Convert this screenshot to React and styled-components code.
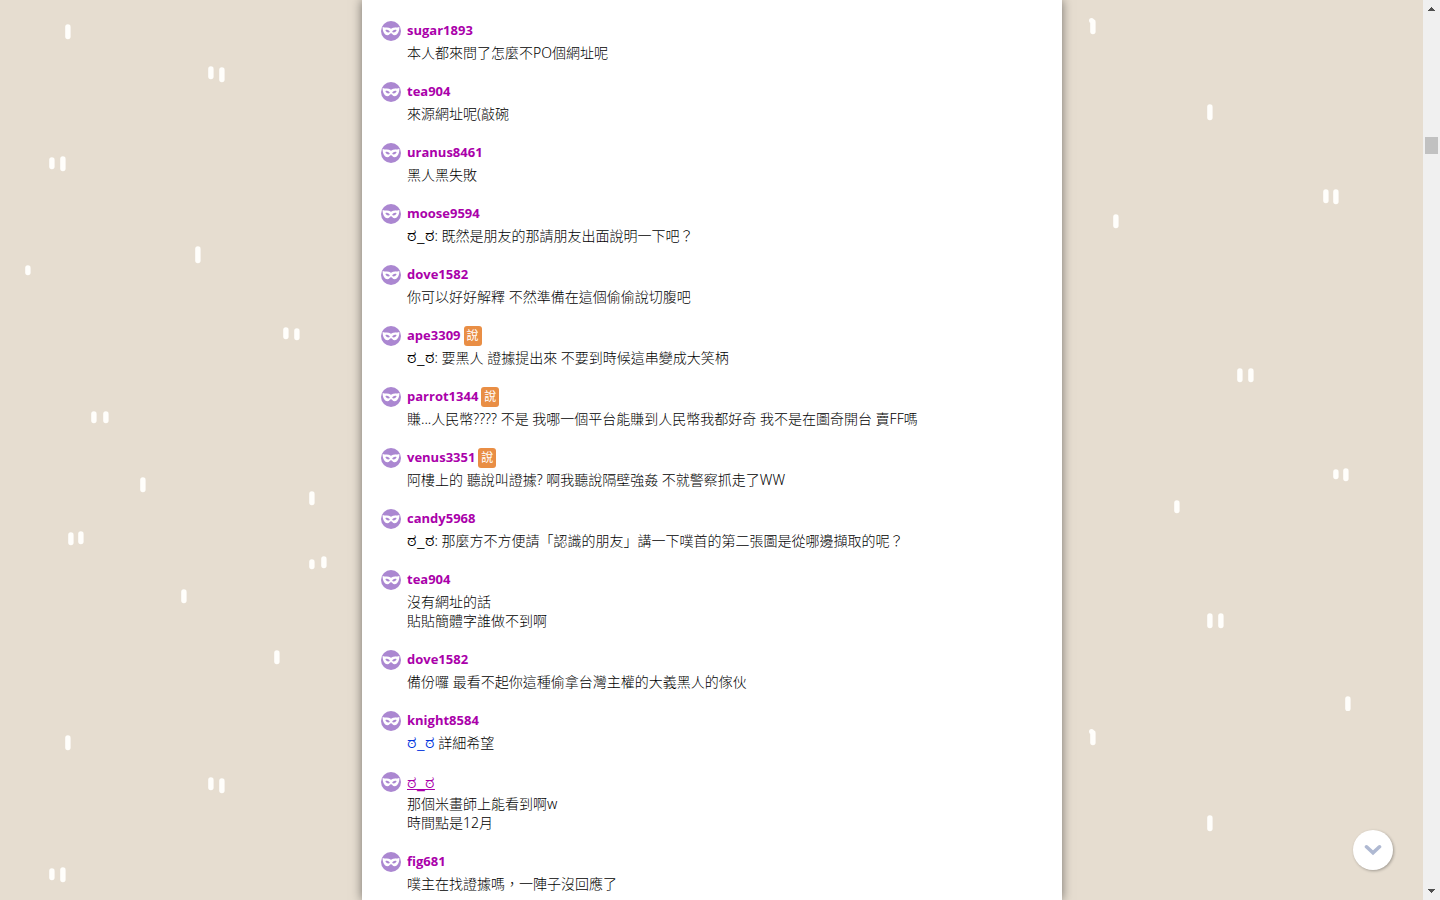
import styled, { createGlobalStyle } from 'styled-components';

const comments = [
  { id: 1, name: 'sugar1893', lines: ['本人都來問了怎麼不PO個網址呢'] },
  { id: 2, name: 'tea904', lines: ['來源網址呢(敲碗'] },
  { id: 3, name: 'uranus8461', lines: ['黑人黑失敗'] },
  { id: 4, name: 'moose9594', face: 'ಠ_ಠ', lines: [': 既然是朋友的那請朋友出面說明一下吧？'] },
  { id: 5, name: 'dove1582', lines: ['你可以好好解釋 不然準備在這個偷偷說切腹吧'] },
  { id: 6, name: 'ape3309', badge: '說', face: 'ಠ_ಠ', lines: [': 要黑人 證據提出來 不要到時候這串變成大笑柄'] },
  { id: 7, name: 'parrot1344', badge: '說', lines: ['賺...人民幣???? 不是 我哪一個平台能賺到人民幣我都好奇 我不是在圖奇開台 賣FF嗎'] },
  { id: 8, name: 'venus3351', badge: '說', lines: ['阿樓上的 聽說叫證據? 啊我聽說隔壁強姦 不就警察抓走了WW'] },
  { id: 9, name: 'candy5968', face: 'ಠ_ಠ', lines: [': 那麼方不方便請「認識的朋友」講一下噗首的第二張圖是從哪邊擷取的呢？'] },
  { id: 10, name: 'tea904', lines: ['沒有網址的話', '貼貼簡體字誰做不到啊'] },
  { id: 11, name: 'dove1582', lines: ['備份囉 最看不起你這種偷拿台灣主權的大義黑人的傢伙'] },
  { id: 12, name: 'knight8584', mention: 'ಠ_ಠ', lines: [' 詳細希望'] },
  { id: 13, name: 'ಠ_ಠ', owner: true, lines: ['那個米畫師上能看到啊w', '時間點是12月'] },
  { id: 14, name: 'fig681', lines: ['噗主在找證據嗎，一陣子沒回應了'] },
];

// [x, y, height] of every drop in one tile of the wallpaper
const drops = [
  [65, 24, 15], [208, 66, 13], [219, 67, 15], [49, 157, 12], [60, 156, 15],
  [195, 246, 17], [25, 265, 10], [283, 327, 12], [294, 328, 12], [91, 411, 12],
  [103, 411, 12], [140, 477, 15], [309, 491, 14], [68, 532, 13], [78, 531, 13],
  [309, 559, 10], [321, 556, 12], [181, 589, 14], [274, 650, 14],
  [1090, 19, 15], [1207, 104, 16], [1323, 189, 14], [1333, 189, 15], [1113, 214, 14],
  [1237, 368, 14], [1248, 368, 14], [1333, 469, 10], [1343, 468, 13], [1174, 500, 13],
  [1207, 613, 15], [1218, 613, 15], [1345, 696, 15],
];

function Wallpaper() {
  return (
    <WallpaperStyle aria-hidden="true">
      <defs>
        <pattern id="drops" width="1423" height="711" patternUnits="userSpaceOnUse">
          {drops.map(([x, y, h]) => (
            <rect key={`${x}-${y}`} x={x + 0.2} y={y + 0.3} width="5.4" height={h} rx="2.7" fill="#fffefb" />
          ))}
          <circle cx="1091.5" cy="20.5" r="2.5" fill="#fffefb" />
        </pattern>
      </defs>
      <rect width="100%" height="100%" fill="url(#drops)" />
    </WallpaperStyle>
  );
}

function MaskAvatar() {
  return (
    <AvatarStyle viewBox="0 0 20 20" aria-hidden="true">
      <circle cx="10" cy="10" r="10" fill="#ab87d1" />
      <path
        fill="#fff"
        fillRule="evenodd"
        d="M1.6 6.1C4.2 7 7.4 5.9 10 7.7C12.6 5.9 15.8 7 18.4 6.1C18.4 10.2 17 14.2 13.6 14.2C11.6 14.2 11.2 12.2 10 12.2C8.8 12.2 8.4 14.2 6.4 14.2C3 14.2 1.6 10.2 1.6 6.1ZM4.4 9.1C4.9 11.2 7.2 12.2 8.8 11.1C8.4 9.2 6.5 8.2 4.4 9.1ZM15.6 9.1C13.5 8.2 11.6 9.2 11.2 11.1C12.8 12.2 15.1 11.2 15.6 9.1Z"
      />
    </AvatarStyle>
  );
}

function Comment({ name, badge, owner, face, mention, lines }) {
  return (
    <CommentStyle>
      <MaskAvatar />
      <div>
        <HeaderStyle>
          {owner ? <OwnerStyle href="#">{name}</OwnerStyle> : <NameStyle href="#">{name}</NameStyle>}
          {badge && <BadgeStyle>{badge}</BadgeStyle>}
        </HeaderStyle>
        {lines.map((line) => (
          <TextStyle key={line}>
            {face && <FaceStyle>{face}</FaceStyle>}
            {mention && <MentionStyle href="#">{mention}</MentionStyle>}
            {line}
          </TextStyle>
        ))}
      </div>
    </CommentStyle>
  );
}

export default function App() {
  return (
    <>
      <GlobalStyle />
      <PageStyle>
        <StageStyle>
          <Wallpaper />
          <PanelStyle>
            {comments.map((comment) => (
              <Comment key={comment.id} {...comment} />
            ))}
          </PanelStyle>
        </StageStyle>
        <ScrollbarStyle aria-hidden="true">
          <ArrowStyle viewBox="0 0 7 4"><path d="M3 0h1v1h1v1h1v1h1v1H0V3h1V2h1V1h1z" /></ArrowStyle>
          <TrackStyle>
            <ThumbStyle />
          </TrackStyle>
          <ArrowStyle viewBox="0 0 7 4"><path d="M0 0h7v1H6v1H5v1H4v1H3V3H2V2H1V1H0z" /></ArrowStyle>
        </ScrollbarStyle>
      </PageStyle>
      <DownButtonStyle type="button" aria-label="往下捲動">
        <svg width="18" height="12" viewBox="0 0 18 12" fill="none">
          <path d="M2.5 2.8L9 8.8L15.5 2.8" stroke="#afb9d2" strokeWidth="3.6" strokeLinecap="round" />
        </svg>
      </DownButtonStyle>
    </>
  );
}

const GlobalStyle = createGlobalStyle`
  * {
    box-sizing: border-box;
  }
  body {
    margin: 0;
    background-color: #e6ddd0;
    color: #000000;
    font-family: 'Open Sans', 'Noto Sans CJK TC', sans-serif;
    font-size: 14px;
    line-height: 19px;
  }
`;

const PageStyle = styled.div`
  display: flex;
  min-height: 100vh;
`;

const StageStyle = styled.main`
  position: relative;
  display: flex;
  flex: 1;
  justify-content: center;
  padding-left: 1px;
`;

const WallpaperStyle = styled.svg`
  position: absolute;
  inset: 0;
  width: 100%;
  height: 100%;
`;

const PanelStyle = styled.ul`
  position: relative;
  display: flex;
  flex-direction: column;
  gap: 20px;
  width: 100%;
  max-width: 700px;
  margin: 0;
  padding: 21px 19px 0;
  list-style: none;
  background-color: #ffffff;
  box-shadow: 0 0 10px rgba(0, 0, 0, 0.5);
`;

const CommentStyle = styled.li`
  display: flex;
  gap: 6px;
`;

const AvatarStyle = styled.svg`
  flex: none;
  width: 20px;
  height: 20px;
`;

const HeaderStyle = styled.div`
  display: flex;
  gap: 3px;
  height: 20px;
  margin-bottom: 2px;
`;

const NameStyle = styled.a`
  color: #aa00aa;
  font-size: 13px;
  font-weight: 700;
  text-decoration: none;
`;

const OwnerStyle = styled(NameStyle)`
  font-size: 18px;
  font-weight: 400;
  text-decoration: underline;
`;

const BadgeStyle = styled.span`
  width: 18px;
  height: 20px;
  border-radius: 3px;
  background-color: #e98e45;
  color: #ffffff;
  font-size: 12px;
  line-height: 20px;
  text-align: center;
`;

const TextStyle = styled.p`
  margin: 0;
  font-family: 'Noto Sans', 'Noto Sans CJK TC', sans-serif;
  font-weight: 300;
`;

const FaceStyle = styled.span`
  font-size: 18px;
  line-height: 0;
`;

const MentionStyle = styled.a`
  color: #0033dd;
  font-size: 18px;
  line-height: 0;
  text-decoration: none;
`;

const ScrollbarStyle = styled.div`
  position: sticky;
  top: 0;
  display: flex;
  flex-direction: column;
  align-items: center;
  width: 17px;
  height: 100vh;
  padding: 7px 0;
  background-color: #f0f0f0;
`;

const ArrowStyle = styled.svg`
  flex: none;
  width: 7px;
  height: 4px;
  fill: #505050;
`;

const TrackStyle = styled.div`
  flex: 1;
  padding-top: 126px;
`;

const ThumbStyle = styled.div`
  width: 13px;
  height: 17px;
  background-color: #c1c1c1;
`;

const DownButtonStyle = styled.button`
  position: fixed;
  right: 47px;
  bottom: 30px;
  display: flex;
  align-items: center;
  justify-content: center;
  width: 40px;
  height: 40px;
  padding: 0;
  border: none;
  border-radius: 50%;
  background-color: #ffffff;
  box-shadow: 1px 1px 3px rgba(0, 0, 0, 0.3);
  cursor: pointer;
`;
